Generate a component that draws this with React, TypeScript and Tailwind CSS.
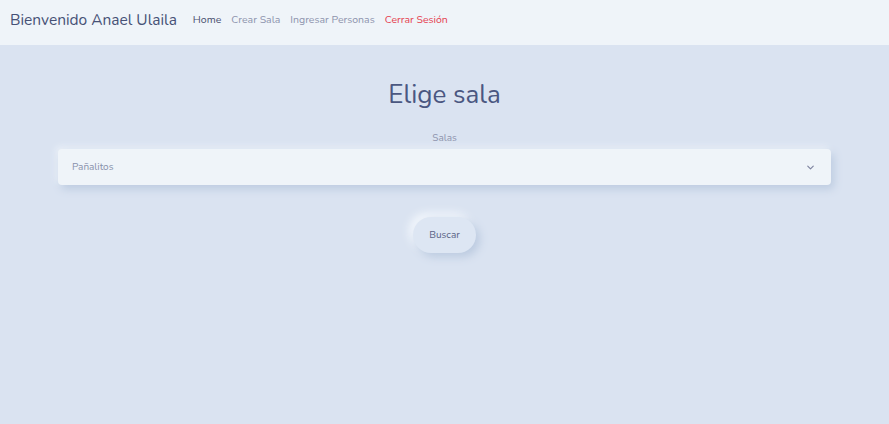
export default function App() {
  return (
    <div
      className="min-h-[424px] w-full bg-[#dae3f1] text-[#44476a]"
      style={{ fontFamily: '"Nunito", "Noto Sans", "Open Sans", sans-serif' }}
    >
      <nav className="flex h-[45px] items-center gap-4 bg-[#eff4f9] pb-[5px] pl-[10px]">
        <span className="text-[15.5px] leading-none text-[#465176]">Bienvenido Anael Ulaila</span>
        <div className="flex items-center gap-[10px] text-[10.5px]">
          <a className="text-[#4a5070]">Home</a>
          <a className="text-[#8d93ad]">Crear Sala</a>
          <a className="text-[#8d93ad]">Ingresar Personas</a>
          <a className="text-[#e5404f]">Cerrar Sesión</a>
        </div>
      </nav>

      <main className="flex flex-col items-center px-[58px] pt-[31px]">
        <h1 className="text-[26px] leading-[38px] text-[#4a5781]">Elige sala</h1>
        <label className="mt-[17px] text-[10px] text-[#8d93ad]">Salas</label>
        <div className="mt-[3px] flex h-[36px] w-full items-center justify-between rounded-[4px] bg-[#eff4f9] px-[14px] shadow-[3px_4px_8px_#bccbe0,-2px_-2px_6px_#eef3f9]">
          <span className="text-[10px] text-[#8890ab]">Pañalitos</span>
          <svg className="mr-[1px] h-[11px] w-[11px] text-[#7d839f]" viewBox="0 0 24 24" fill="none" stroke="currentColor" strokeWidth={2.5} strokeLinecap="round" strokeLinejoin="round">
            <path d="M6 9l6 6 6-6" />
          </svg>
        </div>
        <button className="mt-[32px] flex h-[36px] w-[63px] items-center justify-center rounded-full bg-[#dde6f3] text-[10px] text-[#5a6385] shadow-[4px_4px_8px_#bccbe0,-4px_-4px_8px_#f3f7fc]">
          Buscar
        </button>
      </main>
    </div>
  );
}
